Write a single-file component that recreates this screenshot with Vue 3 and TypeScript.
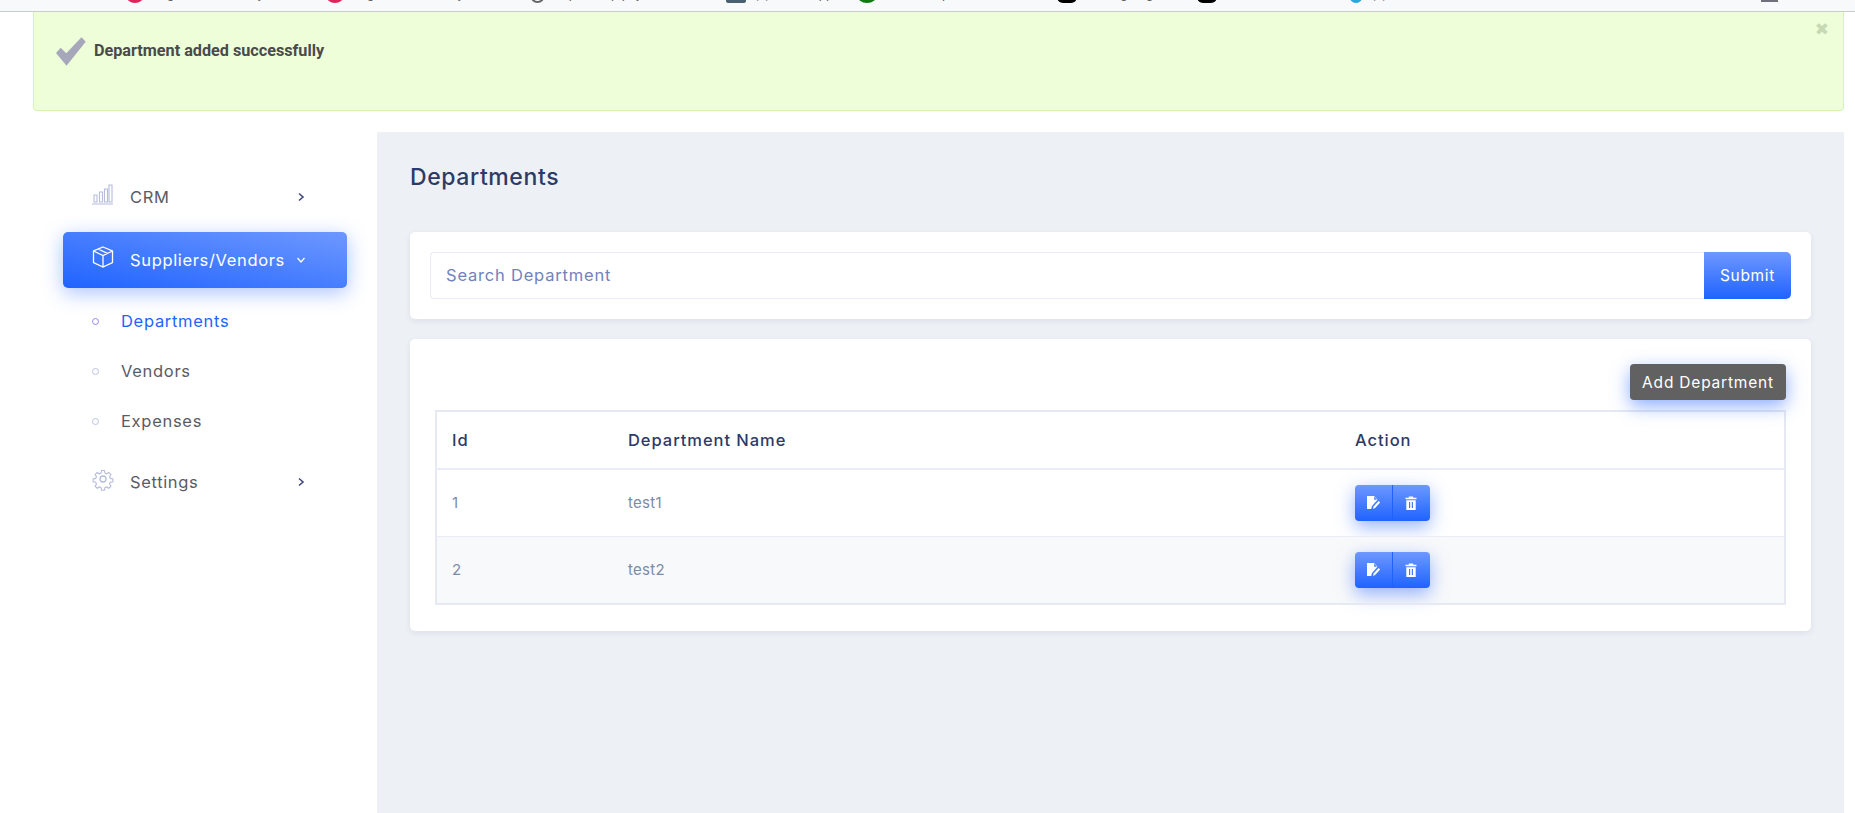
<script setup lang="ts">
const rows = [
  { id: 1, name: 'test1' },
  { id: 2, name: 'test2' },
]
</script>

<template>
  <div class="page">
    <div class="bookmarks">
      <span class="mark m1"><i class="dot pink"></i>Registration history |</span>
      <span class="mark m2"><i class="dot pink"></i>Registration history |</span>
      <span class="mark m3"><i class="dot globe"></i>https://mfp.payments</span>
      <span class="mark m4"><i class="dot slate"></i>(1) WhatsApp</span>
      <span class="mark m5"><i class="dot green"></i>Your Compliance</span>
      <span class="mark m6"><i class="dot black"></i>Testing Page Testing</span>
      <span class="mark m7"><i class="dot black"></i></span>
      <span class="mark m8"><i class="dot blue"></i>(1)</span>
      <span class="bar"></span>
    </div>

    <div class="alert">
      <svg class="check" viewBox="0 0 24 24" width="32" height="32"><path d="M1.500 13.500 5 9.600l4.200 4.100L20.600 1.600 23.800 5 9.400 23z" fill="#a6a7ba" /></svg>
      <strong>Department added successfully</strong>
      <span class="close">✖</span>
    </div>

    <div class="main">
      <aside class="sidebar">
        <a class="nav">
          <svg class="nav-icon" viewBox="0 0 24 24" fill="none" stroke="#b5bcdc" stroke-width="1.100"><path d="M1 22h21M3 13h3v7H3zM8.500 10h3v10h-3zM13.500 7h3v13h-3zM18 3h3v17h-3z" /></svg>
          <span class="label">CRM</span>
          <svg class="chev" viewBox="0 0 10 10" width="10" height="10" fill="none" stroke="#3f4a7a" stroke-width="1.600"><path d="M3 1.500 7 5 3 8.500" /></svg>
        </a>
        <a class="nav active">
          <svg class="nav-icon" viewBox="0 0 24 24" fill="none" stroke="#fff" stroke-width="1.300"><path d="M12 2 21.500 6v11.500L12 22 2.500 17.500V6zM2.500 6 12 10.500 21.500 6M12 10.500V22M7 4l9.500 4.300" /></svg>
          <span class="label">Suppliers/Vendors</span>
          <svg class="chev" viewBox="0 0 10 10" width="10" height="10" fill="none" stroke="#fff" stroke-width="1.300"><path d="M1.500 3 5 7 8.500 3" /></svg>
        </a>
        <ul class="sub">
          <li class="current"><i></i>Departments</li>
          <li><i></i>Vendors</li>
          <li><i></i>Expenses</li>
        </ul>
        <a class="nav settings">
          <svg class="nav-icon" viewBox="0 0 24 24" fill="none" stroke="#b5bcdc" stroke-width="1.300"><circle cx="12" cy="12" r="3" /><path d="M10.300 2h3.400l.6 3 2 .9 2.600-1.600 2.400 2.400-1.600 2.600.9 2 3 .6v3.400l-3 .6-.9 2 1.600 2.600-2.400 2.400-2.600-1.600-2 .9-.6 3h-3.400l-.6-3-2-.9-2.600 1.600-2.400-2.400 1.600-2.600-.9-2-3-.6v-3.400l3-.6.9-2-1.600-2.600 2.400-2.400 2.600 1.600 2-.9z" transform="translate(1.800 1.800) scale(.85)" /></svg>
          <span class="label">Settings</span>
          <svg class="chev" viewBox="0 0 10 10" width="10" height="10" fill="none" stroke="#3f4a7a" stroke-width="1.600"><path d="M3 1.500 7 5 3 8.500" /></svg>
        </a>
      </aside>

      <main class="content">
        <h1>Departments</h1>
        <section class="card search">
          <div class="input">Search Department</div>
          <button class="submit">Submit</button>
        </section>
        <section class="card list">
          <div class="toolbar"><button class="add">Add Department</button></div>
          <table>
            <thead>
              <tr><th class="c1">Id</th><th class="c2">Department Name</th><th>Action</th></tr>
            </thead>
            <tbody>
              <tr v-for="r in rows" :key="r.id">
                <td>{{ r.id }}</td>
                <td>{{ r.name }}</td>
                <td>
                  <div class="group">
                    <button>
                      <svg viewBox="0 0 16 16" width="16" height="16" fill="#fff"><path d="M2 1h7l3.500 3.800L7 11l-.8 3H2z" /><path d="M8 14l.6-2.600 5-5.400 1.500 1.400-5 5.500z" /><path d="M9.200 1.800v3h2.700z" fill="#3f78ff" /></svg>
                    </button>
                    <button>
                      <svg viewBox="0 0 16 16" width="16" height="16" fill="#fff"><path d="M5.800 1.500h4.400v1.200h3.300v1.600h-11V2.700h3.300zM3.300 5.200h9.400V15H3.300zM6 7v6h1.200V7zM8.800 7v6H10V7z" fill-rule="evenodd" /></svg>
                    </button>
                  </div>
                </td>
              </tr>
            </tbody>
          </table>
        </section>
      </main>
    </div>
  </div>
</template>

<style>
html, body { margin: 0; background: #fff; }
</style>

<style scoped>
.page { height: 813px; overflow: hidden; font-family: Inter, "Open Sans", sans-serif; color: #555; background: #fff; display: flex; flex-direction: column; }
.bookmarks { height: 11px; flex: none; background: #f8f9fb; border-bottom: 1px solid #ccc; position: relative; overflow: hidden; font: 13px Roboto, sans-serif; color: #666; }
.mark { position: absolute; top: -14px; white-space: nowrap; display: flex; align-items: center; gap: 8px; line-height: 16px; }
.dot { width: 18px; height: 16px; border-radius: 50%; display: block; transform: translateY(1px); }
.pink { background: #e0245e; }
.globe { width: 15px; background: #fff; border: 2px solid #666; box-sizing: border-box; }
.slate { width: 20px; background: #4a6070; border-radius: 2px; }
.green { width: 20px; background: #0c7c10; }
.black { width: 20px; background: #000; border-radius: 6px; }
.blue { width: 14px; background: #2aa7e0; }
.bar { position: absolute; left: 1761px; top: 0; width: 17px; height: 2px; background: #70717a; }
.m1 { left: 126px; } .m2 { left: 326px; } .m3 { left: 530px; } .m4 { left: 726px; } .m5 { left: 857px; }
.m6 { left: 1057px; } .m7 { left: 1197px; } .m8 { left: 1349px; }
.alert { flex: none; box-sizing: border-box; height: 99px; margin: 0 11px 0 33px; padding: 28px 0 0 20px; background: #eefed9; border: 1px solid #d6f5b5; border-top: 0; border-radius: 0 0 4px 4px; display: flex; align-items: flex-start; gap: 8px; position: relative; font-family: Roboto, sans-serif; font-size: 16.200px; color: #4a4a4a; }
.alert strong { font-weight: 700; line-height: 22px; }
.check { margin-top: -5px; flex: none; }
.close { position: absolute; right: 14px; top: 7px; font-size: 17px; color: #c6d9b4; font-family: "DejaVu Sans", sans-serif; }
.main { flex: 1; display: flex; margin-top: 21px; min-height: 0; }
.sidebar { width: 377px; flex: none; box-sizing: border-box; padding: 37px 0 0 63px; }
.nav { box-sizing: border-box; width: 284px; height: 56px; padding: 0 41px 0 29px; display: flex; align-items: center; font-size: 16.500px; letter-spacing: .65px; color: #5b5b66; }
.nav-icon { flex: none; width: 24px; height: 24px; margin: -7px 15px 0 -1px; }
.label { flex: 1; white-space: nowrap; }
.nav.active { margin-top: 7px; border-radius: 5px; color: #fff; background: linear-gradient(to top right, #1f63ff, #6e98ff); box-shadow: 0 5px 20px rgba(45, 105, 255, .4); }
.chev { flex: none; }
.sub { list-style: none; margin: 8px 0 0; padding: 0; font-size: 16.500px; letter-spacing: .7px; color: #5b5b66; }
.sub li { height: 50px; display: flex; align-items: center; padding-left: 29px; }
.sub li i { width: 5px; height: 5px; border: 1.500px solid #bcc2e2; border-radius: 50%; margin-right: 22px; }
.sub li.current { color: #1f63ff; }
.sub li.current i { border-color: #9a86f5; }
.settings { margin-top: 8px; }
.content { flex: 1; margin-right: 11px; background: #edf0f5; padding: 0 33px; min-width: 0; }
h1 { margin: 0; box-sizing: border-box; padding-top: 31px; height: 100px; font-size: 23px; font-weight: 500; letter-spacing: .6px; line-height: 28px; color: #2e3a66; }
.card { background: #fff; border-radius: 5px; box-shadow: 0 2px 6px rgba(40, 50, 90, .08); }
.search { box-sizing: border-box; height: 87px; padding: 20px; display: flex; }
.input { flex: 1; box-sizing: border-box; height: 47px; border: 1px solid #e9ebf6; border-right: 0; border-radius: 4px 0 0 4px; padding: 0 15px; line-height: 45px; font-size: 16.500px; letter-spacing: .8px; color: #7182bd; }
.submit { width: 87px; height: 47px; border: 0; border-radius: 0 5px 5px 0; color: #fff; font: 15.500px Inter, sans-serif; letter-spacing: .7px; background: linear-gradient(to top, #1f63ff, #6e98ff); }
.list { box-sizing: border-box; height: 292px; margin-top: 20px; padding: 25px 25px 0 25px; }
.toolbar { display: flex; justify-content: flex-end; height: 46px; }
.add { width: 156px; height: 36px; border: 0; border-radius: 4px; background: #616161; color: #fff; font: 15.500px Inter, sans-serif; letter-spacing: .8px; box-shadow: 0 6px 18px rgba(45, 105, 255, .55); position: relative; }
table { width: 100%; border-collapse: collapse; border: 2px solid #e6e9f1; font-size: 15px; letter-spacing: .3px; table-layout: fixed; }
th { height: 56px; padding: 0 15px; text-align: left; font-weight: 500; color: #2e3a66; font-size: 16.500px; letter-spacing: .95px; border-bottom: 2px solid #e9ecf8; }
.c1 { width: 146px; }
.c2 { width: 697px; }
td { height: 67px; box-sizing: border-box; padding: 0 15px; color: #7c8ba8; border-bottom: 1px solid #e9ecf8; }
tbody tr:nth-child(2) td { height: 68px; background: #f8f9fa; border-bottom: 0; }
.group { display: flex; width: max-content; border-radius: 4px; box-shadow: 0 6px 18px rgba(45, 105, 255, .5); }
.group button { width: 37.500px; height: 36px; border: 0; padding: 0; display: flex; align-items: center; justify-content: center; background: linear-gradient(to top, #1f63ff, #6e98ff); }
.group button:first-child { border-radius: 4px 0 0 4px; border-right: 1px solid #1f63ff; }
.group button:last-child { border-radius: 0 4px 4px 0; }
</style>
